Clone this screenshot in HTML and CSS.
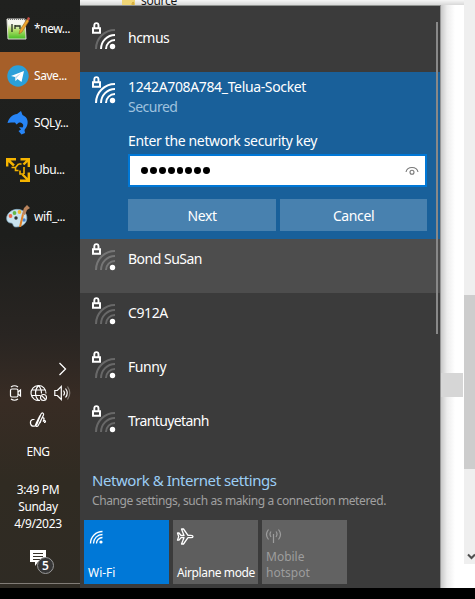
FILE: index.html
```html
<!DOCTYPE html>
<html lang="en">
<head>
<meta charset="utf-8">
<title>Network flyout</title>
<link rel="stylesheet" href="styles.css">
</head>
<body>
<svg class="defs" width="0" height="0">
  <symbol id="lock" viewBox="0 0 10 13"><path d="M2.300 6V3.500a2 2.300 0 0 1 4.200 0V6" fill="none" stroke="#fff" stroke-width="1.900"/><path d="M1 6.200h7v4.600H1z" fill="none" stroke="#fff" stroke-width="2"/></symbol>
  <symbol id="arc-outer" viewBox="0 0 24 28"><path d="M4 27A19 19 0 0 1 23 8"/></symbol>
  <symbol id="arc-inner" viewBox="0 0 24 28"><path d="M9 27A14 14 0 0 1 23 13M14 27A9 9 0 0 1 23 18"/></symbol>
</svg>
<div class="screen">
  <aside class="taskbar">
    <div class="apps">
      <div class="app">
        <svg width="24" height="26" viewBox="0 0 24 26"><defs><linearGradient id="ng" x2="0" y2="1"><stop offset=".25" stop-color="#f6f8ef"/><stop offset=".55" stop-color="#b6df6b"/><stop offset="1" stop-color="#43bd22"/></linearGradient></defs><path d="M1 3h18l1 20H2z" fill="url(#ng)" stroke="#dcdcd4"/><path d="M2 3h17" stroke="#777" stroke-width="2" stroke-dasharray="1 1"/><path d="M6 8v8M9 9v4M9 10h5v3" stroke="#26301f" stroke-width="1.300" fill="none"/><path d="M13 18l1-4 7-11 2 2-7 11z" fill="#eda52c" stroke="#9b6424" stroke-width=".6"/><path d="M21 3l1-2 2 1-1 3z" fill="#c45046"/></svg>
        <span>*new...</span>
      </div>
      <div class="app active">
        <svg width="24" height="24" viewBox="0 0 24 24"><circle cx="12" cy="12" r="10.700" fill="#2ba0d9"/><path d="M5 12l13-5-2.500 11-4-3-2 2-.5-4z" fill="#fff"/><path d="M9 13l6-4-4.500 5-1 3z" fill="#bad8e9"/></svg>
        <span>Save...</span>
      </div>
      <div class="app">
        <svg width="24" height="26" viewBox="0 0 24 26"><path d="M1.500 13C3 7 7 4.500 11 4L15 1l1.500 4c5 2 6.500 7 4 12l-2 3 .5 3-3.500 1.500-3-3.500 2.500-1.500-2-2.500 3.500.5c2-3-.5-5-3.500-5l-2.500 2-1.500-2c-2.500 0-5.500-.5-7.500.500z" fill="#2785f7"/></svg>
        <span>SQLy...</span>
      </div>
      <div class="app">
        <svg width="24" height="26" viewBox="0 0 24 26"><g fill="none" stroke="#f5b400" stroke-width="2.400"><path d="M1.200 9.500V2.200H10M1.500 2.500l6.500 6M14.500 2.200h8.300V10M22.500 2.500l-5 5M22.800 15.500v8.300H14M22.500 23.500l-6-6"/><path d="M5.500 10.500h4l3-3.500M12.500 7h3M18 10v7M9.500 10.500v3h3M18 17h-4v-3.500" stroke-width="1.600"/></g></svg>
        <span>Ubu...</span>
      </div>
      <div class="app">
        <svg width="24" height="26" viewBox="0 0 24 26"><path d="M1 12C4 4 16 3 20 10c3 7-2 13-10 13-4 0-2-4-5-4-4 0-5-4-4-7z" fill="#c8e2ee" stroke="#82abc1" stroke-width=".7"/><circle cx="4.500" cy="12" r="1.900" fill="#eb6848"/><circle cx="8.500" cy="9" r="1.900" fill="#65b749"/><circle cx="13.500" cy="8" r="1.900" fill="#edb72c"/><circle cx="10" cy="14" r="1.700" fill="#30312f"/><circle cx="18" cy="16" r="1.700" fill="#4c85cf"/><path d="M13 23l3-13 2 .5L15 23z" fill="#df8128"/><path d="M16 10l2-6 3-3 3 3-3 2-2 5z" fill="#b9845d"/></svg>
        <span>wifi_...</span>
      </div>
    </div>
    <div class="tray">
      <svg class="more" width="10" height="14" viewBox="0 0 10 14"><path d="M1.500 1l6 6-6 6" fill="none" stroke="#fff" stroke-width="1.300"/></svg>
      <div class="status">
        <svg width="14" height="18" viewBox="0 0 14 18"><g fill="none" stroke="#fff" stroke-width="1.200"><rect x="1.500" y="5" width="7.500" height="8" rx="1.500"/><path d="M9 8l2.500-2v6L9 10M2 3Q5.500.5 9 3M2 15q3.500 2.500 7 0"/></g></svg>
        <svg width="18" height="18" viewBox="0 0 18 18"><g fill="none" stroke="#fff" stroke-width="1.100"><path d="M10 16.400A7.500 7.500 0 1 1 16 9.500M1.500 6h14M1.500 11.500h9M8.500 1.500c-4 4-4 11 0 15M8.500 1.500c2.500 2.500 3 5 3 8"/><circle cx="13.500" cy="13.500" r="3"/><path d="M11.500 11.500l4 4"/></g></svg>
        <svg width="18" height="16" viewBox="0 0 18 16"><g fill="none" stroke="#fff" stroke-width="1.200"><path d="M.8 5.500h2.500l4-4v13l-4-4H.8zM9.500 5.500q2 2.500 0 5M11.500 3.500q3.500 4.500 0 9"/><path d="M13.500 1.500q4.500 6.500 0 13" stroke="#827b74"/></g></svg>
      </div>
      <svg class="pen" width="18" height="18" viewBox="0 0 18 18"><path d="M5.500 8.500H3.500Q1 9.500 1.500 12.500q1 3.500 4.500 2.500 1.500-.5 2-2L12 3q1-1.500 2-.8t.5 1.800L9.500 14q-1 2-2.300 1.300t-.4-2.300L11 4.500M11 12l1.500-4q1.200-2.200 2.200-1t-.7 3.500q2.500-1.500 2.500-.2t-1.500 1.200" fill="none" stroke="#fff" stroke-width="1.200"/></svg>
      <div class="lang">ENG</div>
      <div class="clock"><div class="time">3:49 PM</div><div class="day">Sunday</div><div class="date">4/9/2023</div></div>
      <div class="notify">
        <svg width="18" height="18" viewBox="0 0 18 18"><path d="M1 1h16v12H9l-3 4v-4H1z" fill="#fff"/><path d="M4 4.500h10M4 7.500h10M4 10.500h7" stroke="#373229"/></svg>
        <span class="badge">5</span>
      </div>
    </div>
    <div class="divider"></div>
  </aside>

  <main class="desktop">
    <div class="explorer-strip"><svg width="13" height="6" viewBox="0 0 13 6"><path d="M0 0h13v6H0z" fill="#f0d676"/><path d="M10 6V3q1.500-2 2 0v3" fill="#e2bd4b" stroke="#c99d32" stroke-width=".6"/></svg><span>source</span></div>
    <section class="flyout">
      <ul class="networks">
        <li class="network first"><svg class="signal" width="24" height="28"><g fill="none" stroke="#fff" stroke-width="2"><use href="#arc-outer" class="dim"/><use href="#arc-inner"/></g><circle cx="20.500" cy="24.500" r="2.700" fill="#fff"/><use href="#lock" width="10" height="13"/></svg><span class="n-hcmus">hcmus</span></li>
        <li class="network selected">
          <svg class="signal" width="24" height="28"><g fill="none" stroke="#fff" stroke-width="2"><use href="#arc-outer"/><use href="#arc-inner"/></g><circle cx="20.500" cy="24.500" r="2.700" fill="#fff"/><use href="#lock" width="10" height="13"/></svg>
          <div class="details">
            <div class="ssid"><span class="n-socket">1242A708A784_Telua-Socket</span></div>
            <div class="secured"><span class="n-secured">Secured</span></div>
            <div class="prompt"><span class="n-prompt">Enter the network security key</span></div>
            <div class="field"><span class="dots"><i></i><i></i><i></i><i></i><i></i><i></i><i></i><i></i></span>
              <svg width="14" height="12" viewBox="0 0 14 12"><g fill="none" stroke="#777" stroke-width="1.100"><path d="M1 7Q2 2.500 7 2.500T13 7"/><circle cx="7" cy="7.300" r="2"/></g></svg></div>
            <div class="actions"><button>Next</button><button>Cancel</button></div>
          </div>
        </li>
        <li class="network hover"><svg class="signal" width="24" height="28"><g class="dim" fill="none" stroke="#fff" stroke-width="2"><use href="#arc-outer"/><use href="#arc-inner"/></g><circle cx="20.500" cy="24.500" r="2.700" fill="#fff"/><use href="#lock" width="10" height="13"/></svg><span class="n-bond">Bond SuSan</span></li>
        <li class="network"><svg class="signal" width="24" height="28"><g class="dim" fill="none" stroke="#fff" stroke-width="2"><use href="#arc-outer"/><use href="#arc-inner"/></g><circle cx="20.500" cy="24.500" r="2.700" fill="#fff"/><use href="#lock" width="10" height="13"/></svg><span class="n-c912a">C912A</span></li>
        <li class="network"><svg class="signal" width="24" height="28"><g class="dim" fill="none" stroke="#fff" stroke-width="2"><use href="#arc-outer"/><use href="#arc-inner"/></g><circle cx="20.500" cy="24.500" r="2.700" fill="#fff"/><use href="#lock" width="10" height="13"/></svg><span class="n-funny">Funny</span></li>
        <li class="network"><svg class="signal" width="24" height="28"><g class="dim" fill="none" stroke="#fff" stroke-width="2"><use href="#arc-outer"/><use href="#arc-inner"/></g><circle cx="20.500" cy="24.500" r="2.700" fill="#fff"/><use href="#lock" width="10" height="13"/></svg><span class="n-tran">Trantuyetanh</span></li>
      </ul>
      <div class="list-scroll"></div>
      <footer>
        <div class="settings"><span>Network &amp; Internet settings</span></div>
        <div class="hint"><span>Change settings, such as making a connection metered.</span></div>
        <div class="tiles">
          <div class="tile on"><svg width="18" height="18" viewBox="0 0 18 18"><g fill="none" stroke="#fff" stroke-width="1.300"><path d="M1.500 15.500A12 12 0 0 1 13.500 3.500M4.500 15.500A9 9 0 0 1 13.500 6.500M7.500 15.500A6 6 0 0 1 13.500 9.500"/></g><circle cx="12" cy="14" r="1.600" fill="#fff"/></svg><span>Wi-Fi</span></div>
          <div class="tile"><svg width="18" height="18" viewBox="0 0 18 18"><path d="M1.500 5H3l2 2.500h3L5.500 1h2L12 7.300h3q2 0 2 1.200t-2 1.200h-3L7.500 16h-2L8 9.700H5l-2 2.500H1.500L2.700 8.500z" fill="none" stroke="#fff" stroke-width="1.300" stroke-linejoin="round"/></svg><span class="airplane">Airplane mode</span></div>
          <div class="tile off"><svg width="18" height="18" viewBox="0 0 18 18"><g fill="none" stroke="#9d9d9d" stroke-width="1.200"><path d="M8.500 6v9M6 3.500q-2 2.500 0 5.500M11 3.500q2 2.500 0 5.500M3.500 1.500q-4 5 0 10M13.500 1.500q4 5 0 10"/></g></svg><span>Mobile<br>hotspot</span></div>
        </div>
      </footer>
    </section>
    <div class="page-edge"><div class="row-highlight"></div></div>
    <div class="page-scroll"><div class="thumb"></div><svg width="11" height="10" viewBox="0 0 11 10"><path d="M4 2.500l3.500 3.500L11 2.500" fill="none" stroke="#505050" stroke-width="2"/></svg></div>
  </main>
</div>
</body>
</html>
```
FILE: styles.css
```css
* { box-sizing: border-box; }
body { margin: 0; background: #000; font-family: "Noto Sans", "Open Sans", sans-serif; color: #fff; overflow: hidden; }
.defs { position: absolute; }
svg { display: block; flex: none; }
.screen { width: 475px; height: 588px; display: flex; }
.taskbar { width: 80px; height: 588px; display: flex; flex-direction: column; background: linear-gradient(#20211f 0, #1d1e1c 40%, #292522 57%, #382c24 68%, #302b22 82%, #2f2b24 100%); }
.apps { padding-top: 5px; }
.app { height: 47px; display: flex; align-items: center; padding-left: 6px; gap: 4px; font-size: 12px; letter-spacing: -.45px; white-space: nowrap; }
.app span { margin-top: -1px; }
.app.active { background: #a65f29; }
.tray { display: flex; flex-direction: column; align-items: center; padding-top: 122px; font-size: 12px; line-height: 17px; width: 76px; white-space: nowrap; }
.more { margin-left: 50px; }
.status { display: flex; width: 76px; padding-left: 9px; gap: 7px; align-items: center; margin-top: 8px; height: 18px; }
.status svg:last-child { margin-left: -1px; }
.pen { margin-top: 9px; }
.lang { margin-top: 14px; letter-spacing: -.55px; }
.clock { margin-top: 21px; text-align: center; letter-spacing: -.35px; }
.notify { margin-top: 17px; position: relative; }
.badge { position: absolute; left: 8px; top: 8px; width: 17px; height: 17px; border: 1px solid #999; border-radius: 50%; background: #363636; text-align: center; line-height: 15px; font-weight: 600; }
.divider { height: 1px; background: #827d77; margin-top: auto; margin-bottom: 4px; }
.desktop { width: 395px; height: 588px; display: grid; grid-template-columns: 360px 24px 11px; grid-template-rows: 5px 583px; background: #fff; }
.explorer-strip { grid-column: 1 / 3; background: linear-gradient(#f6f6f6, #d8d8d8); display: flex; padding-left: 42px; gap: 6px; overflow: hidden; color: #181818; font-size: 12px; line-height: 17px; letter-spacing: -.3px; }
.explorer-strip span { margin-top: -8px; }
.flyout { grid-column: 1; grid-row: 2; height: 583px; border-top: 1px solid #909390; background: #3b3b3b; position: relative; display: flex; flex-direction: column; }
.networks { list-style: none; margin: 0; padding: 12px 0 0; }
.network { height: 54px; padding: 4px 0 0 12px; display: flex; gap: 12px; font-size: 14px; line-height: 32px; white-space: nowrap; }
.network.selected { height: 167px; background: #19609a; }
.network.hover { background: #4d4d4d; }
.dim { opacity: .23; }
.details { width: 299px; }
.ssid { height: 22px; line-height: 22px; }
.secured { height: 17px; line-height: 17px; color: #9fc2df; }
.prompt { height: 35px; line-height: 52px; }
.field { height: 33px; margin-top: 4px; border: 2px solid #0078d7; background: #fff; padding: 0 6px 0 11px; display: flex; align-items: center; justify-content: space-between; }
.dots { display: flex; gap: 2px; }
.dots i { width: 6.9px; height: 6.9px; border-radius: 50%; background: #000; }
.actions { margin-top: 12px; display: grid; grid-template-columns: 148px 147px; gap: 4px; }
button { height: 32px; border: 0; padding: 0; background: #4881af; color: #fff; font: 14px "Noto Sans", sans-serif; letter-spacing: -.4px; }
.list-scroll { position: absolute; right: 2px; top: 16px; width: 2px; height: 312px; background: #888; }
footer { padding: 14px 4px 0; white-space: nowrap; }
.settings { height: 22px; line-height: 22px; padding-left: 8px; font-size: 15px; color: #9bcef5; }
.hint { height: 18px; line-height: 18px; padding-left: 8px; font-size: 12px; color: #a0a0a0; margin-top: 1px; }
.tiles { display: flex; gap: 4px; margin-top: 10px; }
.tile { width: 85px; height: 64px; padding: 8px 3px 3px; background: #5e5e5e; display: flex; flex-direction: column; justify-content: space-between; font-size: 12px; line-height: 16px; }
.tile.on { background: #0078d7; }
.tile.on svg { margin: 0 0 0 2px; }
.tile.off { color: #9d9d9d; background: #626262; }
.tile span { padding-left: 1px; }
.page-edge { grid-column: 2; grid-row: 2; padding-top: 368px; border-left: 1px solid #969696; background: linear-gradient(90deg, #c9c9c9, #ededed 6px, #fff 14px); }
.row-highlight { height: 24px; width: 22px; background: #d6d6d6; }
.page-scroll { grid-column: 3; grid-row: 1 / 3; height: 564px; padding-top: 295px; background: #efefef; display: flex; flex-direction: column; }
.thumb { height: 174px; background: #cdcdcd; }
.page-scroll svg { margin-top: 83px; }
.n-socket, .n-prompt { letter-spacing: -.35px; }
.n-hcmus, .n-secured, .n-bond { letter-spacing: -.5px; }
.n-c912a { letter-spacing: -.4px; }
.n-funny { letter-spacing: -.45px; }
.n-tran { letter-spacing: -.6px; }
.settings span { letter-spacing: -.45px; }
.hint span { letter-spacing: -.39px; }
.airplane { letter-spacing: -.38px; }
```
